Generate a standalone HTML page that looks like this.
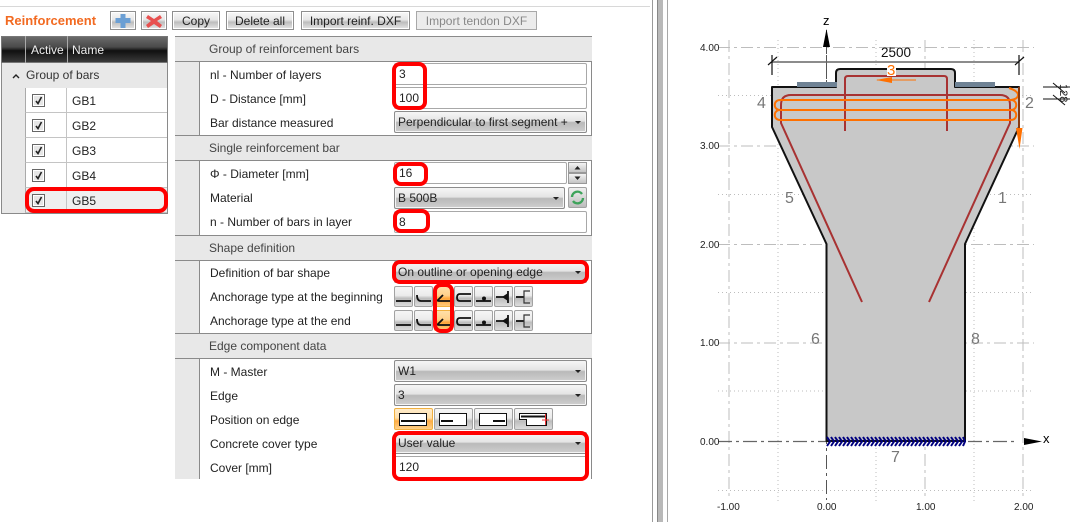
<!DOCTYPE html>
<html><head><meta charset="utf-8">
<style>
html,body{margin:0;padding:0;background:#fff}
body{width:1090px;height:522px;position:relative;overflow:hidden;font-family:"Liberation Sans",sans-serif;font-size:12px;color:#222}
.a{position:absolute;box-sizing:border-box}
.t{position:absolute;white-space:nowrap;line-height:16px}
.btn{position:absolute;box-sizing:border-box;height:19px;top:11px;border:1px solid #8f8f8f;background:linear-gradient(#f8f8f8 0,#e8e8e8 45%,#bdbdbd 60%,#e6e6e6 100%);text-align:center;line-height:18px;box-shadow:inset 0 0 0 1px #fff}
.sel{position:absolute;box-sizing:border-box;height:22px;left:394px;width:193px;border:1px solid #8c8c8c;border-radius:2px;background:linear-gradient(#f6f6f6 0,#e4e4e4 45%,#b9b9b9 52%,#cfcfcf 100%);line-height:21px;padding-left:3px;box-shadow:inset 0 0 0 1px #f4f4f4}
.sel:after{content:"";position:absolute;right:5px;top:9px;border:3px solid transparent;border-top:3px solid #222;border-bottom:0}
.inp{position:absolute;box-sizing:border-box;height:22px;left:394px;width:193px;border:1px solid #a8a8a8;border-radius:2px;background:#fff;line-height:21px;padding-left:4px}
.hd{position:absolute;box-sizing:border-box;left:175px;width:417px;background:#e8e8e8;border-bottom:1px solid #8a8a8a;border-top:1px solid #8a8a8a;color:#444;padding-left:34px;line-height:24px;height:26px}
.red{position:absolute;box-sizing:border-box;border:4px solid #f00;border-radius:8px}
.cb{position:absolute;left:32px;width:13px;height:13px;box-sizing:border-box;border:1px solid #666;background:#e6e6e6;box-shadow:inset 0 0 0 1px #fff}
.cb svg{position:absolute;left:1px;top:1px}
.ic{position:absolute;box-sizing:border-box;width:19px;height:21px;border:1px solid #a2a2a2;border-radius:2px;background:linear-gradient(#f6f6f6 0,#ebebeb 45%,#bcbcbc 60%,#dcdcdc 100%)}
.ic svg{position:absolute;left:0;top:0}
.row{position:absolute;box-sizing:border-box;left:25px;width:142px;height:25px;border-bottom:1px solid #c4c4c4;border-left:1px solid #aaa;background:#fff}
</style></head><body>

<div class="a" style="left:0;top:6px;width:650px;height:1px;background:#d8d8d8"></div>
<div class="a" style="left:652px;top:0;width:1px;height:522px;background:#9a9a9a"></div>
<div class="a" style="left:657px;top:0;width:6px;height:522px;background:#b9b9b9;border-left:1px solid #888"></div>
<div class="a" style="left:667px;top:0;width:1px;height:522px;background:#a8a8a8"></div>

<div class="t" style="left:5px;top:13px;color:#f26a21;font-weight:bold;font-size:13px">Reinforcement</div>
<div class="btn" style="left:110px;width:26px;top:11px"><svg width="24" height="17" style="position:absolute;left:0;top:0"><path d="M9.500 2h5v4h5v5h-5v5h-5v-5h-5v-5h5z" fill="#6b9fd4"/></svg></div>
<div class="btn" style="left:141px;width:26px;top:11px"><svg width="24" height="17" style="position:absolute;left:0;top:0"><path d="M6 3l6 4 6-4 2 3-5 3 5 4-2 3-6-4-6 4-2-3 5-4-5-3z" fill="#e8504f"/></svg></div>
<div class="btn" style="left:172px;width:48px">Copy</div>
<div class="btn" style="left:226px;width:68px">Delete all</div>
<div class="btn" style="left:301px;width:109px">Import reinf. DXF</div>
<div class="a" style="left:416px;top:11px;width:121px;height:19px;border:1px solid #a8a8a8;background:#ececec;color:#888;text-align:center;line-height:18px">Import tendon DXF</div>

<!-- left table -->
<div class="a" style="left:1px;top:36px;width:167px;height:178px;background:#e8e8e8;border:1px solid #8a8a8a"></div>
<div class="a" style="left:1px;top:36px;width:167px;height:27px;background:linear-gradient(#6a6a6a 0,#4a4a4a 40%,#101010 55%,#3a3a3a 100%);border:1px solid #777"></div>
<div class="a" style="left:25px;top:36px;width:1px;height:27px;background:#aaa"></div>
<div class="a" style="left:67px;top:36px;width:1px;height:27px;background:#aaa"></div>
<div class="t" style="left:31px;top:42px;color:#eee">Active</div>
<div class="t" style="left:72px;top:42px;color:#eee">Name</div>
<svg class="a" style="left:11px;top:72px" width="10" height="8"><path d="M2 6l3-3 3 3" fill="none" stroke="#222" stroke-width="1.400"/></svg>
<div class="t" style="left:26px;top:67px;color:#333">Group of bars</div>

<div class="row" style="top:88px"></div>
<div class="row" style="top:113px"></div>
<div class="row" style="top:138px"></div>
<div class="row" style="top:163px"></div>
<div class="row" style="top:188px;background:#efefef"></div>
<div class="a" style="left:66px;top:88px;width:1px;height:125px;background:#c4c4c4"></div>
<div class="cb" style="top:94px"><svg width="9" height="9"><path d="M2 5l2 2.500L7.500 1" fill="none" stroke="#222" stroke-width="1.600"/></svg></div>
<div class="cb" style="top:119px"><svg width="9" height="9"><path d="M2 5l2 2.500L7.500 1" fill="none" stroke="#222" stroke-width="1.600"/></svg></div>
<div class="cb" style="top:144px"><svg width="9" height="9"><path d="M2 5l2 2.500L7.500 1" fill="none" stroke="#222" stroke-width="1.600"/></svg></div>
<div class="cb" style="top:169px"><svg width="9" height="9"><path d="M2 5l2 2.500L7.500 1" fill="none" stroke="#222" stroke-width="1.600"/></svg></div>
<div class="cb" style="top:194px"><svg width="9" height="9"><path d="M2 5l2 2.500L7.500 1" fill="none" stroke="#222" stroke-width="1.600"/></svg></div>
<div class="t" style="left:72px;top:93px">GB1</div>
<div class="t" style="left:72px;top:118px">GB2</div>
<div class="t" style="left:72px;top:143px">GB3</div>
<div class="t" style="left:72px;top:168px">GB4</div>
<div class="t" style="left:72px;top:193px">GB5</div>
<div class="red" style="left:25px;top:187px;width:143px;height:26px;border-radius:9px"></div>

<!-- right panel -->
<div class="a" style="left:175px;top:36px;width:25px;height:443px;background:#e8e8e8;border-right:1px solid #8a8a8a"></div>
<div class="a" style="left:591px;top:36px;width:1px;height:443px;background:#8a8a8a"></div>
<div class="hd" style="top:36px;height:26px">Group of reinforcement bars</div>
<div class="hd" style="top:135px">Single reinforcement bar</div>
<div class="hd" style="top:235px">Shape definition</div>
<div class="hd" style="top:333px">Edge component data</div>

<div class="t" style="left:210px;top:67px">nl - Number of layers</div>
<div class="t" style="left:210px;top:91px">D - Distance [mm]</div>
<div class="t" style="left:210px;top:115px">Bar distance measured</div>
<div class="t" style="left:210px;top:166px">Φ - Diameter [mm]</div>
<div class="t" style="left:210px;top:190px">Material</div>
<div class="t" style="left:210px;top:214px">n - Number of bars in layer</div>
<div class="t" style="left:210px;top:265px">Definition of bar shape</div>
<div class="t" style="left:210px;top:289px">Anchorage type at the beginning</div>
<div class="t" style="left:210px;top:313px">Anchorage type at the end</div>
<div class="t" style="left:210px;top:364px">M - Master</div>
<div class="t" style="left:210px;top:388px">Edge</div>
<div class="t" style="left:210px;top:412px">Position on edge</div>
<div class="t" style="left:210px;top:436px">Concrete cover type</div>
<div class="t" style="left:210px;top:460px">Cover [mm]</div>

<div class="inp" style="top:63px">3</div>
<div class="inp" style="top:87px">100</div>
<div class="sel" style="top:111px">Perpendicular to first segment +</div>
<div class="inp" style="top:162px;width:173px">16</div>
<div class="a" style="left:568px;top:162px;width:19px;height:11px;border:1px solid #999;background:linear-gradient(#f4f4f4,#c4c4c4)"></div>
<div class="a" style="left:568px;top:173px;width:19px;height:11px;border:1px solid #999;background:linear-gradient(#f4f4f4,#c4c4c4)"></div>
<svg class="a" style="left:568px;top:162px" width="19" height="22"><path d="M6.500 7.500h6l-3-3.500zM6.500 14.500h6l-3 3.500z" fill="#222"/></svg>
<div class="sel" style="top:187px;width:171px">B 500B</div>
<div class="a" style="left:568px;top:187px;width:19px;height:21px;border:1px solid #a2a2a2;border-radius:2px;background:linear-gradient(#f0f0f0,#bdbdbd)"><svg width="17" height="19" style="position:absolute;left:0;top:0"><path d="M3 9a5.500 5.500 0 0 1 10-3M14 10a5.500 5.500 0 0 1-10 3" fill="none" stroke="#3da35a" stroke-width="2.400"/></svg></div>
<div class="inp" style="top:211px">8</div>
<div class="sel" style="top:261px">On outline or opening edge</div>

<!-- anchorage icons -->
<div class="ic" style="left:394px;top:286px"><svg width="17" height="19"><path d="M1 14h15" stroke="#111" stroke-width="1.800" fill="none"/></svg></div>
<div class="ic" style="left:414px;top:286px"><svg width="17" height="19"><path d="M2 8q0 6 4 6h10" stroke="#111" stroke-width="1.800" fill="none"/></svg></div>
<div class="ic" style="left:434px;top:286px;background:linear-gradient(#ffe0a8 0,#ffd08a 45%,#ffa63a 60%,#ffc97a 100%);border-color:#f0b040"><svg width="17" height="19"><path d="M8 8l-5 5q-1 1 1 1h12" stroke="#111" stroke-width="1.800" fill="none"/></svg></div>
<div class="ic" style="left:454px;top:286px"><svg width="17" height="19"><path d="M16 7H5q-3 0-3 3.500T5 14h11" stroke="#111" stroke-width="1.800" fill="none"/></svg></div>
<div class="ic" style="left:474px;top:286px"><svg width="17" height="19"><path d="M1 14h15" stroke="#111" stroke-width="1.800" fill="none"/><circle cx="9" cy="11.500" r="2" fill="#111"/></svg></div>
<div class="ic" style="left:494px;top:286px"><svg width="17" height="19"><path d="M1 10h9M13 4v12" stroke="#111" stroke-width="1.800" fill="none"/><path d="M7 10l6-4v8z" fill="#111"/></svg></div>
<div class="ic" style="left:514px;top:286px"><svg width="17" height="19"><path d="M1 10h8" stroke="#111" stroke-width="1.800" fill="none"/><path d="M15 4H9v12h6" stroke="#333" stroke-width="1.200" fill="none"/></svg></div>

<div class="ic" style="left:394px;top:310px"><svg width="17" height="19"><path d="M1 14h15" stroke="#111" stroke-width="1.800" fill="none"/></svg></div>
<div class="ic" style="left:414px;top:310px"><svg width="17" height="19"><path d="M2 8q0 6 4 6h10" stroke="#111" stroke-width="1.800" fill="none"/></svg></div>
<div class="ic" style="left:434px;top:310px;background:linear-gradient(#ffe0a8 0,#ffd08a 45%,#ffa63a 60%,#ffc97a 100%);border-color:#f0b040"><svg width="17" height="19"><path d="M8 8l-5 5q-1 1 1 1h12" stroke="#111" stroke-width="1.800" fill="none"/></svg></div>
<div class="ic" style="left:454px;top:310px"><svg width="17" height="19"><path d="M16 7H5q-3 0-3 3.500T5 14h11" stroke="#111" stroke-width="1.800" fill="none"/></svg></div>
<div class="ic" style="left:474px;top:310px"><svg width="17" height="19"><path d="M1 14h15" stroke="#111" stroke-width="1.800" fill="none"/><circle cx="9" cy="11.500" r="2" fill="#111"/></svg></div>
<div class="ic" style="left:494px;top:310px"><svg width="17" height="19"><path d="M1 10h9M13 4v12" stroke="#111" stroke-width="1.800" fill="none"/><path d="M7 10l6-4v8z" fill="#111"/></svg></div>
<div class="ic" style="left:514px;top:310px"><svg width="17" height="19"><path d="M1 10h8" stroke="#111" stroke-width="1.800" fill="none"/><path d="M15 4H9v12h6" stroke="#333" stroke-width="1.200" fill="none"/></svg></div>

<div class="sel" style="top:360px">W1</div>
<div class="sel" style="top:384px">3</div>

<!-- position icons -->
<div class="ic" style="left:394px;top:408px;width:39px;height:22px;background:linear-gradient(#ffeccb 0,#ffdfa8 45%,#ffac45 60%,#ffd089 100%);border-color:#f0b040"><svg width="37" height="20"><rect x="4.500" y="4.500" width="27" height="12" fill="#fff" stroke="#111"/><path d="M6 12h24" stroke="#111" stroke-width="2"/></svg></div>
<div class="ic" style="left:434px;top:408px;width:39px;height:22px"><svg width="37" height="20"><rect x="4.500" y="4.500" width="27" height="12" fill="#fff" stroke="#111"/><path d="M6 12h12" stroke="#111" stroke-width="2"/></svg></div>
<div class="ic" style="left:474px;top:408px;width:39px;height:22px"><svg width="37" height="20"><rect x="4.500" y="4.500" width="27" height="12" fill="#fff" stroke="#111"/><path d="M18 12h12" stroke="#111" stroke-width="2"/></svg></div>
<div class="ic" style="left:514px;top:408px;width:39px;height:22px"><svg width="37" height="20"><path d="M4.500 4.500h27v12h-20v-6h-7z" fill="#fff" stroke="#111"/><path d="M6 7.500h24" stroke="#111" stroke-width="2"/><path d="M30.500 5v11M27 11h7" stroke="#e33" stroke-width="1"/></svg></div>

<div class="sel" style="top:432px">User value</div>
<div class="inp" style="top:456px">120</div>

<!-- red highlights -->
<div class="red" style="left:392px;top:62px;width:35px;height:48px"></div>
<div class="red" style="left:393px;top:162px;width:35px;height:24px"></div>
<div class="red" style="left:393px;top:209px;width:37px;height:24px"></div>
<div class="red" style="left:392px;top:260px;width:197px;height:24px"></div>
<div class="red" style="left:433px;top:283px;width:21px;height:50px"></div>
<div class="red" style="left:392px;top:431px;width:197px;height:50px"></div>

<!-- drawing -->
<svg class="a" style="left:668px;top:0" width="422" height="522" viewBox="668 0 422 522" font-family="Liberation Sans, sans-serif">
<g stroke="#bdbdbd" stroke-width="1" fill="none" stroke-dasharray="1 3">
<path d="M778 40v461M876 40v461M974 40v461"/>
<path d="M718 95.500h316M718 194.500h316M718 292.500h316M718 391h316M718 490.500h316"/>
</g>
<g stroke="#bdbdbd" stroke-width="1" fill="none" stroke-dasharray="12 4 3 4">
<path d="M729 40v460M925 40v460M1023 40v460"/>
<path d="M718 47.500h316M718 146h316M718 244.500h316M718 343h316"/>
</g>
<path d="M718 441.500h300" stroke="#666" stroke-width="1.200" stroke-dasharray="14 4 3 4" fill="none"/>
<path d="M826.500 30v470" stroke="#555" stroke-width="1" stroke-dasharray="14 4 3 4" fill="none"/>

<path d="M826.500 441V244L772 127V87h64V73q0-4 4-4h111q4 0 4 4v14h64v40L965 244v197z" fill="#c8c8c8" stroke="#111" stroke-width="2" stroke-linejoin="round"/>
<rect x="797" y="82" width="40" height="5" fill="#6f8294"/>
<rect x="955" y="82" width="40" height="5" fill="#6f8294"/>
<path d="M826.500 40v42" stroke="#555" stroke-width="1" stroke-dasharray="14 4 3 4" fill="none"/>
<path d="M862 302L781 123v-18q0-10 10-10h209q10 0 10 10v18L929 302" fill="none" stroke="#a83232" stroke-width="2"/>
<path d="M845 131V79q0-3 3-3h96q3 0 3 3v52" fill="none" stroke="#a83232" stroke-width="2"/>
<g fill="none" stroke="#ff7000" stroke-width="2">
<path d="M780 100h231M780 110h231M780 120h231"/>
<path d="M780 100c-7 0-7 10 0 10c-7 0-7 10 0 10M1011 120c7 0 7-10 0-10c7 0 7-10 0-10"/>
<path d="M1009 88q9 3 9 7t-7 5"/>
</g>
<path d="M1019 87v41" stroke="#8a3a10" stroke-width="2"/>
<path d="M1016 128h6.500l-3 21z" fill="#ff7000"/>
<path d="M877 80h39" stroke="#ff7000" stroke-width="1"/>
<path d="M876 80l16-3v6z" fill="#ff7000"/>
<rect x="887" y="62" width="9" height="14" fill="#fff"/>
<text x="887" y="75" font-size="15" fill="#ff7000">3</text>

<!-- hatch -->
<g stroke="#000080" stroke-width="2" fill="none">
<path d="M827 437l3 4.500-3 4.500M831 437l3 4.500-3 4.500M835 437l3 4.500-3 4.500M839 437l3 4.500-3 4.500M843 437l3 4.500-3 4.500M847 437l3 4.500-3 4.500M851 437l3 4.500-3 4.500M855 437l3 4.500-3 4.500M859 437l3 4.500-3 4.500M863 437l3 4.500-3 4.500M867 437l3 4.500-3 4.500M871 437l3 4.500-3 4.500M875 437l3 4.500-3 4.500M879 437l3 4.500-3 4.500M883 437l3 4.500-3 4.500M887 437l3 4.500-3 4.500M891 437l3 4.500-3 4.500M895 437l3 4.500-3 4.500M899 437l3 4.500-3 4.500M903 437l3 4.500-3 4.500M907 437l3 4.500-3 4.500M911 437l3 4.500-3 4.500M915 437l3 4.500-3 4.500M919 437l3 4.500-3 4.500M923 437l3 4.500-3 4.500M927 437l3 4.500-3 4.500M931 437l3 4.500-3 4.500M935 437l3 4.500-3 4.500M939 437l3 4.500-3 4.500M943 437l3 4.500-3 4.500M947 437l3 4.500-3 4.500M951 437l3 4.500-3 4.500M955 437l3 4.500-3 4.500M959 437l3 4.500-3 4.500M963 437l2 4.500-2 4.500"/>
</g>

<!-- axes -->
<path d="M826.500 29l-3.500 18h7z" fill="#000"/>
<text x="823" y="25" font-size="13">z</text>
<path d="M1042 441.500l-18-3.500v7z" fill="#000"/>
<text x="1043" y="443" font-size="13">x</text>

<!-- dims -->
<path d="M772 62h247" stroke="#666" stroke-width="1.500"/>
<path d="M772 55v20M1019 55v20M768 65l9-8M1015 65l9-8" stroke="#111" stroke-width="1.200"/>
<text x="881" y="57" font-size="13.500" fill="#111">2500</text>
<path d="M1043 87h27M1043 99h27M1053 83l12 10M1053 95l12 10" stroke="#111" stroke-width="1"/>
<text transform="translate(1060,84) rotate(90)" font-size="11" fill="#222">128</text>

<g font-size="16" fill="#777">
<text x="757" y="108">4</text><text x="1025" y="108">2</text>
<text x="785" y="203">5</text><text x="998" y="203">1</text>
<text x="811" y="344">6</text><text x="971" y="344">8</text>
<text x="891" y="462">7</text>
</g>
<g font-size="10" fill="#222">
<text x="700" y="51">4.00</text><text x="700" y="149">3.00</text><text x="700" y="248">2.00</text><text x="700" y="346">1.00</text><text x="700" y="445">0.00</text>
<text x="717" y="510">-1.00</text><text x="817" y="510">0.00</text><text x="916" y="510">1.00</text><text x="1014" y="510">2.00</text>
</g>
</svg>
</body></html>
